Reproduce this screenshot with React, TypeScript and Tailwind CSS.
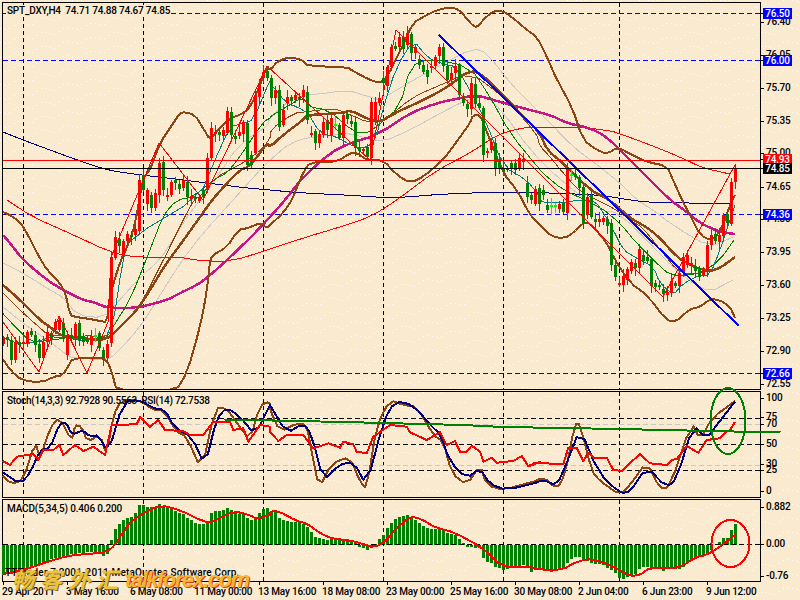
const zp = (ox: number, oy: number, s: string) =>
  s
    .trim()
    .split(/\s+/)
    .map((p) => {
      const [x, y] = p.split(",").map(Number);
      return `${(ox + x / 3).toFixed(1)},${(oy + y / 3).toFixed(1)}`;
    })
    .join(" ");

// one round of corner cutting so hand-read points look like the smooth indicator curves
const smooth = (s: string) => {
  const pts = s.trim().split(/\s+/).map((p) => p.split(",").map(Number));
  const out: string[] = [pts[0].join(",")];
  for (let i = 0; i < pts.length - 1; i++) {
    const [a, b] = pts[i];
    const [c, d] = pts[i + 1];
    out.push(`${(a * 0.75 + c * 0.25).toFixed(1)},${(b * 0.75 + d * 0.25).toFixed(1)}`);
    out.push(`${(a * 0.25 + c * 0.75).toFixed(1)},${(b * 0.25 + d * 0.75).toFixed(1)}`);
  }
  out.push(pts[pts.length - 1].join(","));
  return out.join(" ");
};

const BROWN = "#8b4513";

// top, bottom, colour (1 red, 0 green, 2 lime); one bar each 4px from x=3
const bars: [number, number, number][] = [
  [338,344,1],[337,340,0],[340,360,0],[342,360,1],[342,345,0],[342,344,1],[332,343,1],[331,335,0],[335,345,0],[344,358,0],
  [342,358,1],[332,342,1],[333,339,0],[322,330,1],[320,330,1],[323,335,0],[337,355,1],[335,339,0],[324,338,1],[323,340,0],
  [337,342,0],[340,342,0],[336,345,1],[335,337,2],[333,348,0],[350,358,0],[344,358,1],[257,343,1],[237,258,1],[239,246,0],
  [241,255,1],[234,241,1],[235,237,0],[229,235,1],[180,231,1],[175,190,0],[190,204,1],[195,208,0],[193,208,1],[163,195,1],
  [162,190,0],[195,197,1],[182,195,1],[180,183,0],[184,189,0],[180,188,1],[182,197,0],[196,199,1],[197,199,0],[197,201,1],
  [190,197,0],[158,188,1],[128,158,1],[132,134,1],[132,135,0],[130,136,1],[111,133,1],[112,135,0],[136,139,0],[132,136,1],
  [122,134,1],[123,165,0],[155,165,0],[96,153,1],[85,97,1],[72,78,1],[71,78,0],[78,98,0],[90,98,1],[90,127,0],
  [110,125,1],[97,103,1],[97,101,0],[95,100,1],[97,99,0],[90,97,1],[92,120,0],[133,135,1],[131,143,0],[134,143,1],
  [122,135,1],[120,130,0],[118,136,1],[124,126,2],[125,138,0],[115,138,1],[114,119,0],[121,124,0],[122,148,0],[148,151,0],
  [149,151,1],[147,157,0],[102,158,1],[102,120,1],[98,103,1],[78,83,0],[67,86,1],[47,67,1],[46,49,0],[37,47,1],
  [37,49,0],[33,45,1],[34,53,0],[47,53,1],[59,65,0],[65,72,0],[70,77,0],[66,68,1],[57,66,1],[47,56,1],
  [47,66,0],[66,80,0],[73,80,1],[66,73,1],[65,95,0],[96,103,0],[104,109,0],[83,109,1],[84,104,0],[103,108,0],
  [108,155,0],[151,153,1],[142,150,1],[143,168,0],[159,168,0],[168,172,0],[168,170,1],[163,168,0],[163,170,0],[158,168,1],
  [159,162,0],[183,197,0],[195,200,0],[189,204,1],[188,204,0],[190,195,0],[205,210,0],[205,207,2],[205,207,2],[204,209,1],
  [203,212,0],[168,213,1],[174,176,2],[174,177,0],[177,188,0],[187,223,0],[197,215,1],[195,217,0],[219,222,0],[219,222,1],
  [218,222,1],[219,226,0],[223,265,0],[265,277,0],[283,285,1],[276,285,1],[269,280,1],[262,271,1],[263,268,0],[249,268,1],
  [255,261,0],[257,261,0],[259,286,0],[283,287,0],[285,287,0],[289,294,0],[292,295,1],[281,293,1],[283,286,0],[273,286,1],
  [257,272,1],[255,265,1],[263,266,1],[266,271,0],[268,277,0],[270,275,1],[245,270,1],[235,245,1],[234,241,0],[235,242,1],
  [215,236,1],[214,223,0],[182,224,1],[169,182,1],
];

const hist = [
  570,568,566,562,558,555,552,549,545,538,531,527,522,518,515,512,510,508,506,505,503,502,501,500,505,512,508,
  465,432,418,405,398,395,385,360,360,365,365,365,358,365,368,370,378,385,388,400,405,415,418,417,408,385,378,378,375,370,375,378,388,388,400,405,395,385,372,370,
  378,380,398,405,408,410,412,412,418,425,440,455,460,462,465,462,462,462,465,467,470,475,485,488,495,488,478,463,450,428,415,403,397,392,390,395,405,415,422,430,432,432,432,435,445,448,450,462,475,487,487,490,490,518,530,535,545,550,555,552,545,547,545,540,545,
  560,555,553,552,552,560,552,552,550,535,522,517,515,522,527,535,538,538,540,548,555,565,580,582,575,573,567,552,547,545,550,552,552,557,553,553,552,552,545,530,525,520,515,510,505,495,480,470,460,458,435,417,
];

const upperBand = smooth(
  "3,212 10,215 20,222 28,235 38,255 47,270 60,283 66,295 70,315 76,317 90,319 100,321 107,322 109,300 113,285 120,262 128,245 135,225 143,178 150,170 160,143 170,128 180,113 185,112 195,115 203,128 210,140 215,133 230,118 240,115 250,108 260,85 267,66 270,70 278,61 290,57 303,60 307,66 347,67 353,71 370,80 380,83 387,77 397,57 403,45 413,23 423,17 437,10 450,7 460,10 470,23 477,28 483,20 493,11 503,11 513,18 527,30 537,37 547,57 557,80 572,107 583,140 597,150 607,154 618,147 630,154 647,162 667,166 673,180 682,200 690,215 700,235 712,241 722,228 730,205 735,195",
);
const midBand = smooth(
  "3,285 20,300 40,320 50,327 60,335 70,337 100,340 110,337 125,322 137,310 150,290 165,265 180,245 200,217 212,200 227,183 240,170 248,167 257,157 267,143 270,147 283,135 303,120 307,115 343,113 350,110 370,120 380,122 397,112 417,103 437,93 450,85 470,70 483,75 503,95 520,113 540,133 547,150 563,163 590,190 610,200 630,218 643,225 657,235 677,257 687,263 697,268 710,271 720,268 735,257",
);
const lowerBand = smooth(
  "3,359 10,370 23,381 43,382 53,377 63,375 70,363 72,359 97,357 107,360 112,373 117,392 175,392 187,373 200,327 207,290 210,260 213,255 227,247 238,230 248,228 260,223 267,228 270,225 283,213 292,200 297,187 303,173 310,162 337,162 350,153 357,153 367,160 383,160 397,175 410,183 423,177 443,160 460,137 470,123 473,115 480,115 487,132 503,173 517,190 530,215 540,225 552,237 565,238 573,233 583,223 590,223 607,243 615,260 630,283 647,295 667,321 677,321 685,313 693,308 700,307 710,299 720,300 730,307 735,318",
);
const magenta = smooth(
  "3,235 10,243 23,260 47,280 63,290 83,300 93,302 108,308 137,308 167,300 180,293 197,285 208,277 227,260 250,238 270,217 285,200 303,177 330,153 350,143 377,135 410,113 437,103 460,98 477,95 500,102 530,110 550,115 567,123 590,128 607,137 630,160 647,177 670,200 687,212 700,223 720,232 735,234",
);
const navy = smooth(
  "3,132 23,140 50,150 77,160 107,170 133,174 167,178 207,183 247,188 270,190 303,193 353,195.4 380,197.4 403,197.4 437,194.4 487,192.4 530,192.4 563,193.4 603,195.4 633,200.4 650,202.4 720,203.4 730,203.4",
);
const redMa = smooth(
  "7,200 33,217 67,232 110,252 133,257 177,257 203,261 233,261 270,249 303,238 337,228 370,217 397,200 437,170 470,153 497,135 520,128 540,127 603,128 643,142 680,157 703,168 730,174",
);
const zigzag =
  "3,322 39,372 59,316 87,373 108,322 111,257 159,143 203,200 267,66 370,160 396,30 663,297 735,165";
const gray1 = smooth(
  "3,263 23,273 50,290 63,297 77,315 103,318 117,303 140,277 160,260 177,233 187,217 200,200 217,177 240,143 267,127 270,117 300,92 313,95 347,90 370,97 380,100 410,82 437,67 473,48 487,53 510,83 537,110 550,123 573,147 600,167 620,183 637,200 653,210 677,228 710,247 733,237",
);
const gray2 = smooth(
  "3,307 23,323 37,333 57,347 67,355 73,358 107,360 117,353 140,327 157,300 180,263 203,233 233,200 260,170 270,160 290,143 310,137 337,135 350,133 380,143 410,130 437,115 460,103 483,93 503,112 530,150 560,180 600,210 620,213 663,257 687,280 710,292 733,280",
);
const thinBrown = smooth(
  [
    zp(0, 200, "10,280 60,330 110,375 150,410 200,415 320,415 345,395 390,350 430,300 490,180 530,100 580,0"),
    zp(0, 0, "600,590 650,530 700,505 760,470 810,420"),
    zp(270, 0, "0,390 70,340 110,335 190,325 230,340 300,370 350,355 430,290 500,260 600,215 700,290 800,400"),
    zp(530, 0, "30,440 60,470 100,520 150,575"),
    zp(530, 200, "200,0 260,30 300,60 340,85 400,160 440,210 480,225 540,210 570,205"),
  ].join(" "),
);
const thinGreen = smooth(
  [
    zp(0, 200, "8,340 50,385 90,425 140,423 250,405 320,415 345,370 390,300 450,150 490,45 530,0"),
    zp(0, 0, "580,590 640,540 680,520 720,470 790,365 810,355"),
    zp(270, 0, "0,350 50,320 100,290 115,320 175,330 250,395 290,400 320,380 390,320 420,200 480,175 600,200 660,290 720,400 810,510"),
    zp(530, 0, "50,530 100,570"),
    zp(530, 200, "210,20 270,70 320,130 380,190 420,225 480,225 520,215 570,180 612,120"),
  ].join(" "),
);
const teal = smooth(
  [
    zp(0, 200, "8,410 60,435 130,420 180,400 220,420 280,420 335,400 370,170 390,115"),
    zp(0, 0, "600,590 640,490 690,380 730,370 760,360 810,240"),
    zp(270, 0, "0,250 50,310 80,320 115,340 150,400 200,410 250,440 290,445 320,410 340,320 380,200 430,120 470,170 510,190 560,200 610,290 650,370 700,500 770,540 810,590"),
    zp(530, 200, "30,5 80,10 150,0 195,0 230,55 250,90 280,150 320,175 370,200 390,250 430,285 460,250 510,225 540,225 570,150 600,60 615,15"),
  ].join(" "),
);

const stochBrown = smooth(
  [
    zp(0, 385, "8,272 35,297 70,285 105,170 120,220 150,130 178,95 215,170 225,120 245,125 262,170 300,150 320,210 340,90 365,45 420,45 460,75 490,75 530,140 560,155 605,258 645,70 680,70 715,120 750,165 780,60 810,50"),
    zp(270, 385, "0,75 30,140 80,115 110,120 125,200 147,310 185,235 240,215 270,290 290,312 320,120 360,45 400,60 440,65 490,150 520,170 545,265 590,300 630,240 650,300 700,315 770,295 810,285"),
    zp(530, 385, "0,298 40,275 80,312 105,270 135,115 150,118 185,258 210,288 270,330 300,300 350,230 390,312 420,305 485,110 510,165 545,100 615,48"),
  ].join(" "),
);
const stochNavy = smooth(
  [
    zp(0, 385, "8,262 60,297 90,265 120,195 150,190 180,113 200,115 215,150 250,135 270,155 295,150 325,205 370,50 420,45 460,70 495,75 525,130 575,155 615,243 650,100 680,68 720,95 765,150 810,60"),
    zp(270, 385, "0,60 50,145 100,115 125,150 160,288 205,240 250,230 290,302 340,110 375,48 430,60 490,130 510,145 540,230 590,280 630,250 660,298 710,315 810,290"),
    zp(530, 385, "0,298 40,285 80,302 110,235 150,130 205,262 270,325 300,320 350,245 410,308 440,280 490,120 530,160 560,120 615,50"),
  ].join(" "),
);
const rsi = [
  zp(0, 385, "8,228 30,240 50,215 100,207 115,225 130,195 160,195 178,180 190,210 225,180 250,198 280,185 315,210 335,120 410,118 420,97 450,125 475,105 495,135 550,138 570,150 610,150 640,110 690,110 700,135 730,130 745,170 780,120 810,125"),
  zp(270, 385, "0,140 25,168 50,150 100,150 130,190 175,175 210,188 220,170 250,178 260,200 290,205 310,155 360,120 410,125 420,142 470,165 510,142 530,180 555,168 570,200 590,200 605,182 630,200 640,230 665,218 680,233 730,228 755,213 775,243 810,230"),
  zp(530, 385, "0,243 15,233 100,238 115,188 140,188 160,228 175,203 190,218 230,218 250,255 275,258 310,225 330,208 360,235 410,240 425,225 440,222 470,183 505,203 530,165 570,160 590,140"),
].join(" ");
const signal = smooth(
  [
    zp(0, 385, "8,567 50,560 100,545 150,528 200,513 250,508 320,502 345,480 370,440 395,408 430,385 480,360 540,375 610,410 640,410 700,378 750,390 770,402 810,390"),
    zp(270, 385, "0,380 25,378 80,408 110,415 150,445 190,462 240,465 310,487 340,475 380,430 420,395 450,400 500,430 550,440 640,490 700,548 770,545"),
    zp(530, 385, "0,547 40,555 100,553 130,535 170,522 200,527 240,540 300,573 330,570 360,548 410,550 450,547 500,515 530,510 570,485 615,450"),
  ].join(" "),
);

const VGRID = [23.5, 143.5, 263.5, 383.5, 503.5, 619.5];

const dots: [number, number][] = [];
for (const row of [0, 14, 28]) {
  for (let i = 0; i < 16; i++) {
    const x = i * 4.5;
    const y = row + 14 - (x * 14) / 72 + 2 * Math.sin((2 * Math.PI * x) / 24);
    dots.push([Math.round(x), Math.round(y + 42) % 42]);
  }
}

function Line({ d, c, w = 1 }: { d: string; c: string; w?: number }) {
  return <polyline points={d} fill="none" stroke={c} strokeWidth={w} strokeLinejoin="round" />;
}

function VLines({ y1, y2 }: { y1: number; y2: number }) {
  return (
    <>
      {VGRID.map((x) => (
        <line key={x} x1={x} x2={x} y1={y1} y2={y2} stroke="#000" strokeDasharray="4 3" />
      ))}
    </>
  );
}

function HDash({ y, c = "#000" }: { y: number; c?: string }) {
  return <line x1={3} x2={760} y1={y} y2={y} stroke={c} strokeDasharray="5 3" />;
}

function Candles() {
  return (
    <>
      {bars.map(([t, b, c], i) => {
        const x = 3 + 4 * i;
        const color = c === 1 ? "#ff0000" : c === 2 ? "#00ff00" : "#008000";
        const up = 2 + ((i * 7) % 6);
        const down = 2 + ((i * 5) % 7);
        return (
          <g key={i}>
            <line x1={x + 0.5} x2={x + 0.5} y1={t - up} y2={b + down} stroke={color} />
            <rect x={x - 1} y={t} width={3} height={Math.max(b - t, 1)} fill={color} />
          </g>
        );
      })}
    </>
  );
}

function AxisLabels({
  top,
  labels,
  boxes = [],
}: {
  top: number;
  labels: [string, number][];
  boxes?: [string, number, string][];
}) {
  return (
    <div className="relative w-[38px]">
      {labels.map(([t, y]) => (
        <div key={t}>
          <span className="absolute left-0 w-[3px] h-px bg-black" style={{ top: y - top }} />
          <span className="absolute left-[5px] text-[10px] leading-[12px] text-black tracking-[-0.2px]" style={{ top: y - top - 6 }}>
            {t}
          </span>
        </div>
      ))}
      {boxes.map(([t, y, bg]) => (
        <div key={t}>
          <span className="absolute left-0 w-[3px] h-px bg-black" style={{ top: y - top }} />
          <span
            className="absolute left-[2px] w-[29px] h-[11px] flex items-center justify-center text-[10px] text-white tracking-[-0.2px]"
            style={{ top: y - top - 5, backgroundColor: bg }}
          >
            {t}
          </span>
        </div>
      ))}
    </div>
  );
}

const timeLabels = [
  "29 Apr 2011", "3 May 16:00", "6 May 08:00", "11 May 00:00", "13 May 16:00", "18 May 08:00",
  "23 May 00:00", "25 May 16:00", "30 May 08:00", "2 Jun 04:00", "6 Jun 23:00", "9 Jun 12:00",
];

export default function App() {
  return (
    <div className="relative w-[800px] h-[600px] overflow-hidden bg-[#faebd0] font-['Roboto',sans-serif] font-medium text-black">
      <svg className="absolute inset-0" width={800} height={600}>
        <defs>
          <pattern id="paper" width={72} height={42} patternUnits="userSpaceOnUse">
            {dots.map(([x, y], i) => (
              <rect key={i} x={x} y={y} width={1} height={1} fill="#fff" />
            ))}
          </pattern>
        </defs>
        <rect width={800} height={600} fill="url(#paper)" />
      </svg>

      <div className="relative flex flex-col pt-[2px] pl-[2px]">
        {/* price pane */}
        <div className="flex">
          <div className="relative w-[759px] h-[388px] border border-black">
            <svg className="block overflow-hidden" width={757} height={386} viewBox="3 3 757 386" shapeRendering="crispEdges">
              <VLines y1={3} y2={389} />
              <HDash y={13.5} c="#0000ff" />
              <HDash y={60.5} c="#0000ff" />
              <HDash y={214.5} c="#0000ff" />
              <HDash y={373.5} c="#0000ff" />
              <Line d={gray1} c="#c8c8c8" />
              <Line d={gray2} c="#c8c8c8" />
              <Line d={redMa} c="#ff0000" />
              <Line d={navy} c="#000080" />
              <Line d={magenta} c="#c71585" w={2.5} />
              <Line d={thinBrown} c={BROWN} />
              <Line d={thinGreen} c="#008000" />
              <Line d={teal} c="#008080" />
              <Line d={upperBand} c={BROWN} w={2} />
              <Line d={midBand} c={BROWN} w={2.5} />
              <Line d={lowerBand} c={BROWN} w={2} />
              <Candles />
              <Line d={zigzag} c="#ff0000" />
              <line x1={439} y1={35} x2={739} y2={326} stroke="#0000ff" strokeWidth={2} />
              <line x1={3} x2={760} y1={160.5} y2={160.5} stroke="#ff0000" />
              <line x1={3} x2={760} y1={168.5} y2={168.5} stroke="#000" />
            </svg>
            <span className="absolute left-[3px] top-[2px] px-px text-[10px] leading-[12px] tracking-[-0.2px] bg-[#faebd0] whitespace-pre">
              SPT_DXY,H4  74.71 74.88 74.67 74.85
            </span>
          </div>
          <AxisLabels
            top={2}
            labels={[
              ["76.40", 22], ["76.05", 55], ["75.70", 88], ["75.35", 121], ["75.00", 153], ["74.65", 187],
              ["74.30", 219], ["73.95", 252], ["73.60", 285], ["73.25", 318], ["72.90", 351], ["72.55", 384],
            ]}
            boxes={[
              ["76.50", 13, "#0000ff"], ["76.00", 60, "#0000ff"], ["74.93", 159, "#ff0000"],
              ["74.85", 168, "#000000"], ["74.36", 214, "#0000ff"], ["72.66", 373, "#0000ff"],
            ]}
          />
        </div>

        {/* stochastic + rsi pane */}
        <div className="flex mt-px">
          <div className="relative w-[759px] h-[107px] border border-black">
            <svg className="block overflow-visible" width={757} height={105} viewBox="3 392 757 105" shapeRendering="crispEdges">
              <VLines y1={392} y2={497} />
              <HDash y={418.5} />
              <HDash y={444.5} />
              <HDash y={470.5} />
              <HDash y={424.5} c="#c8c8c8" />
              <HDash y={465.5} c="#c8c8c8" />
              <Line d={stochBrown} c={BROWN} w={2} />
              <Line d={stochNavy} c="#000080" w={2} />
              <Line d={rsi} c="#ff0000" w={2} />
              <polyline points="729,432 733,425 735,422" fill="none" stroke="#ff0000" strokeWidth={2} />
              <polyline points="224,419.5 344,422 383,423 463,425 503,427 620,429 663,430 780.5,432.5" fill="none" stroke="#008000" strokeWidth={2} />
              <ellipse cx={728} cy={421} rx={17.5} ry={33} fill="none" stroke="#008000" strokeWidth={2} />
            </svg>
            <span className="absolute left-[4px] top-[3px] text-[10px] leading-[12px] tracking-[-0.3px] whitespace-pre">
              Stoch(14,3,3) 92.7928 90.5563  RSI(14) 72.7538
            </span>
          </div>
          <AxisLabels
            top={391}
            labels={[["100", 398], ["75", 417], ["70", 424], ["50", 444], ["30", 464], ["25", 470], ["0", 491]]}
          />
        </div>

        {/* macd pane */}
        <div className="flex mt-px">
          <div className="relative w-[759px] h-[83px] border border-black">
            <svg className="block overflow-visible" width={757} height={81} viewBox="3 500 757 81" shapeRendering="crispEdges">
              <VLines y1={500} y2={581} />
              {hist.map((v, i) => {
                const y = 385 + v / 3;
                const zero = 544.5;
                return (
                  <rect key={i} x={3 + 4 * i - 1} y={Math.min(y, zero)} width={3} height={Math.abs(y - zero)} fill="#008000" />
                );
              })}
              <HDash y={544.5} />
              <Line d={signal} c="#ff0000" w={2} />
              <ellipse cx={730.5} cy={543.5} rx={19} ry={23.5} fill="none" stroke="#ff0000" strokeWidth={2} />
            </svg>
            <span className="absolute left-[4px] top-[3px] text-[10px] leading-[12px] tracking-[-0.15px] whitespace-pre">MACD(5,34,5) 0.406 0.200</span>
            <span className="absolute left-[2px] top-[67px] text-[10px] leading-[12px] tracking-[0.15px] whitespace-pre">
              TTTrader 7 2001-2011 MetaQuotes Software Corp.
            </span>
          </div>
          <AxisLabels top={499} labels={[["0.882", 507], ["0.00", 544], ["-0.76", 576]]} />
        </div>

        {/* time axis */}
        <div className="flex">
          {timeLabels.map((t) => (
            <div key={t} className="relative w-[64px] h-[18px] pt-[4px] text-[10px] leading-[12px] whitespace-nowrap tracking-[-0.2px]">
              <span className="absolute left-px top-0 w-px h-[3px] bg-black" />
              {t}
            </div>
          ))}
        </div>
      </div>

      {/* watermark */}
      <div className="absolute left-[12px] top-[565px] flex items-center gap-[6px] text-[22px] leading-[26px] font-bold italic text-[#ecc23a] font-['Noto_Sans_CJK_SC',sans-serif] [text-shadow:1px_1px_0_#8a6a10]">
        <span>畅</span>
        <span>客</span>
        <span>外</span>
        <span>汇</span>
      </div>
      <span className="absolute left-[125px] top-[566px] text-[22px] leading-[28px] italic font-bold tracking-[-1.5px] text-[#f2b632] font-['Liberation_Sans',sans-serif] [text-shadow:1px_1px_0_#e2381c]">
        talkforex.com
      </span>
    </div>
  );
}
